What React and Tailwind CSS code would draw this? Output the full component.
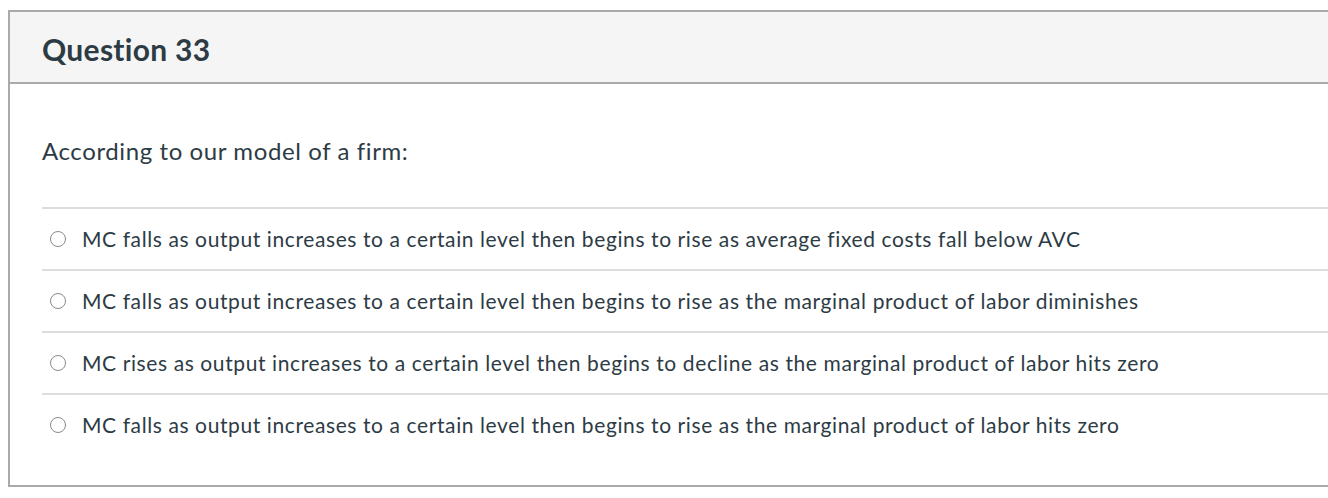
const options = [
  "MC falls as output increases to a certain level then begins to rise as average fixed costs fall below AVC",
  "MC falls as output increases to a certain level then begins to rise as the marginal product of labor diminishes",
  "MC rises as output increases to a certain level then begins to decline as the marginal product of labor hits zero",
  "MC falls as output increases to a certain level then begins to rise as the marginal product of labor hits zero",
];

export default function App() {
  return (
    <div
      className="bg-white h-[498px] overflow-hidden pt-[10px] pl-2 text-[#2d3b45]"
      style={{ fontFamily: "Lato, 'Liberation Sans', sans-serif" }}
    >
      <div className="w-[1340px] border-2 border-[#aaaaaa]">
        <div className="h-[72px] bg-[#f5f5f5] border-b-2 border-[#aaaaaa] flex items-center pl-8 pt-1">
          <h2 className="text-[30px] font-bold tracking-[0.3px]">Question 33</h2>
        </div>
        <div className="pt-[50px] pb-[30px] pl-8">
          <p className="text-[24px] leading-[33px] tracking-[0.6px]">According to our model of a firm:</p>
          <div className="mt-[40px]">
            {options.map((opt, i) => (
              <label
                key={i}
                className="flex items-center h-[62px] border-t-2 border-[#dddddd]"
              >
                <span className="ml-2 w-4 h-4 rounded-full border-[1.5px] border-[#8a8a8a] shrink-0" />
                <span className="ml-4 text-[21px] tracking-[0.6px]">{opt}</span>
              </label>
            ))}
          </div>
        </div>
      </div>
    </div>
  );
}
